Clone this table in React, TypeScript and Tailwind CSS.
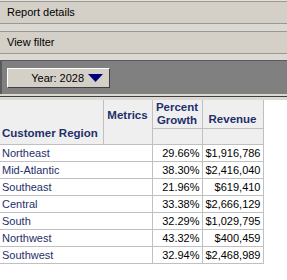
const rows = [
  { region: "Northeast", growth: "29.66%", revenue: "$1,916,786" },
  { region: "Mid-Atlantic", growth: "38.30%", revenue: "$2,416,040" },
  { region: "Southeast", growth: "21.96%", revenue: "$619,410" },
  { region: "Central", growth: "33.38%", revenue: "$2,666,129" },
  { region: "South", growth: "32.29%", revenue: "$1,029,795" },
  { region: "Northwest", growth: "43.32%", revenue: "$400,459" },
  { region: "Southwest", growth: "32.94%", revenue: "$2,468,989" },
];

function PanelBar({ label }: { label: string }) {
  return (
    <div className="h-[22px] border-b border-[#9a9892] bg-[#d4d0c8] pl-[7px] text-[11px] leading-[21px] text-black">
      {label}
    </div>
  );
}

export default function App() {
  return (
    <div className="h-[280px] w-[287px] overflow-hidden bg-white font-['Liberation_Sans',Arial,sans-serif]">
      <div className="h-px bg-[#e4e2dc]" />
      <div className="h-px bg-[#9a9892]" />
      <PanelBar label="Report details" />
      <div className="h-[8px] border-b border-[#9a9892] bg-[#dcd9d3]" />
      <PanelBar label="View filter" />
      <div className="h-[6px] bg-[#dcd9d3]" />

      <div className="h-[34px] border-t border-l-2 border-[#5a5a5a] bg-[#808080] pt-[7px] pl-[5px]">
        <div className="flex h-[20px] w-[103px] items-center justify-end gap-[4px] border border-t-white border-l-white border-r-[#404040] border-b-[#404040] bg-[#d4d0c8] pr-[6px] text-[11px] text-black">
          <span>Year: 2028</span>
          <svg width="15" height="8" viewBox="0 0 15 8">
            <polygon points="0,0 15,0 7.5,8" fill="#00007f" />
          </svg>
        </div>
      </div>
      <div className="h-[2px] bg-[#dcd9d3]" />
      <div className="h-px bg-[#404040]" />
      <div className="h-[3px] bg-[#dcd9d3]" />

      <table className="w-[263px] table-fixed border-collapse text-[11px] leading-[14px]">
        <colgroup>
          <col className="w-[103px]" />
          <col className="w-[49px]" />
          <col className="w-[50px]" />
          <col className="w-[61px]" />
        </colgroup>
        <thead>
          <tr className="h-[28px] bg-[#efefef] text-[11.5px] font-bold text-[#1f2f6b]">
            <th rowSpan={2} className="border-r border-b border-[#c0c0c0] px-[2px] pb-[4px] text-left align-bottom whitespace-nowrap">
              Customer Region
            </th>
            <th rowSpan={2} className="border-r border-b border-[#c0c0c0] px-[2px] pt-[8px] text-center align-top">
              Metrics
            </th>
            <th className="border-r border-b border-[#c0c0c0] px-[1px] text-center align-middle leading-[13px]">
              Percent Growth
            </th>
            <th className="border-r border-b border-[#c0c0c0] px-[1px] pb-[2px] text-center align-bottom">
              Revenue
            </th>
          </tr>
          <tr className="h-[16px] bg-[#efefef]">
            <td className="border-r border-b border-[#c0c0c0] p-0" />
            <td className="border-r border-b border-[#c0c0c0] p-0" />
          </tr>
        </thead>
        <tbody>
          {rows.map((row) => (
            <tr key={row.region} className="h-[17px]">
              <td colSpan={2} className="border-r border-b border-[#c0c0c0] px-[2px] py-0 text-left text-[#1f2f6b]">
                {row.region}
              </td>
              <td className="border-r border-b border-[#c0c0c0] px-[2px] py-0 text-right text-black">{row.growth}</td>
              <td className="border-r border-b border-[#c0c0c0] px-[2px] py-0 text-right text-black">{row.revenue}</td>
            </tr>
          ))}
        </tbody>
      </table>
    </div>
  );
}
